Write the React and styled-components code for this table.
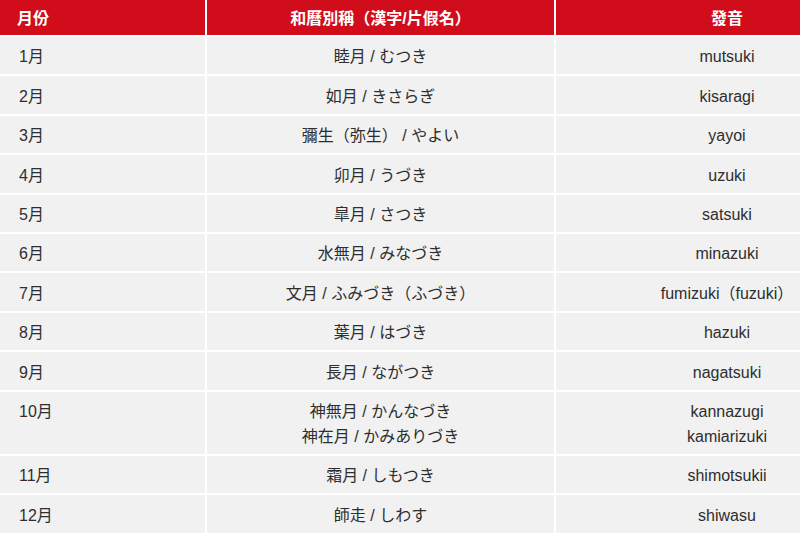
import styled, { createGlobalStyle } from 'styled-components'

const GlobalStyle = createGlobalStyle`
  html, body {
    margin: 0;
    padding: 0;
    background: #ffffff;
    overflow: hidden;
  }
`

const Wrapper = styled.div`
  width: 800px;
  height: 535px;
  overflow: hidden;
  background: #ffffff;
`

const Table = styled.table`
  width: 900px;
  table-layout: fixed;
  border-collapse: separate;
  border-spacing: 0;
  font-family: "Liberation Sans", Arial, "Noto Sans CJK JP", sans-serif;
  font-size: 16px;
  color: #2e2e2e;
`

const HeadCell = styled.th`
  box-sizing: border-box;
  width: ${p => p.$width}px;
  height: 37px;
  padding: 2px ${p => (p.$align === 'left' ? '17px' : '0')} 0;
  background: #d10d1c;
  color: #ffffff;
  font-weight: bold;
  text-align: ${p => p.$align || 'center'};
  vertical-align: middle;
  line-height: 20px;
  border-right: 2px solid #ffffff;
  border-bottom: 2px solid #ffffff;
`

const Cell = styled.td`
  box-sizing: border-box;
  padding: 7.4px ${p => (p.$align === 'left' ? '19px' : '0')} 5px;
  background: #f1f1f1;
  text-align: ${p => p.$align || 'center'};
  vertical-align: top;
  line-height: 25px;
  white-space: nowrap;
  border-right: 2px solid #ffffff;
  border-bottom: 2px solid #ffffff;
`

const Line = styled.div`
  display: block;
`

const months = [
  { m: '1月', kanji: ['睦月 / むつき'], romaji: ['mutsuki'] },
  { m: '2月', kanji: ['如月 / きさらぎ'], romaji: ['kisaragi'] },
  { m: '3月', kanji: ['彌生（弥生） / やよい'], romaji: ['yayoi'] },
  { m: '4月', kanji: ['卯月 / うづき'], romaji: ['uzuki'] },
  { m: '5月', kanji: ['皐月 / さつき'], romaji: ['satsuki'] },
  { m: '6月', kanji: ['水無月 / みなづき'], romaji: ['minazuki'] },
  { m: '7月', kanji: ['文月 / ふみづき（ふづき）'], romaji: ['fumizuki（fuzuki）'] },
  { m: '8月', kanji: ['葉月 / はづき'], romaji: ['hazuki'] },
  { m: '9月', kanji: ['長月 / ながつき'], romaji: ['nagatsuki'] },
  { m: '10月', kanji: ['神無月 / かんなづき', '神在月 / かみありづき'], romaji: ['kannazugi', 'kamiarizuki'] },
  { m: '11月', kanji: ['霜月 / しもつき'], romaji: ['shimotsukii'] },
  { m: '12月', kanji: ['師走 / しわす'], romaji: ['shiwasu'] },
]

const App = () => {
  return (
    <Wrapper>
      <GlobalStyle />
      <Table>
        <thead>
          <tr>
            <HeadCell $width={207} $align="left">月份</HeadCell>
            <HeadCell $width={349}>和曆別稱（漢字/片假名）</HeadCell>
            <HeadCell $width={344}>發音</HeadCell>
          </tr>
        </thead>
        <tbody>
          {months.map(row => (
            <tr key={row.m}>
              <Cell $align="left">{row.m}</Cell>
              <Cell>
                {row.kanji.map(k => <Line key={k}>{k}</Line>)}
              </Cell>
              <Cell>
                {row.romaji.map(r => <Line key={r}>{r}</Line>)}
              </Cell>
            </tr>
          ))}
        </tbody>
      </Table>
    </Wrapper>
  )
}

export default App
